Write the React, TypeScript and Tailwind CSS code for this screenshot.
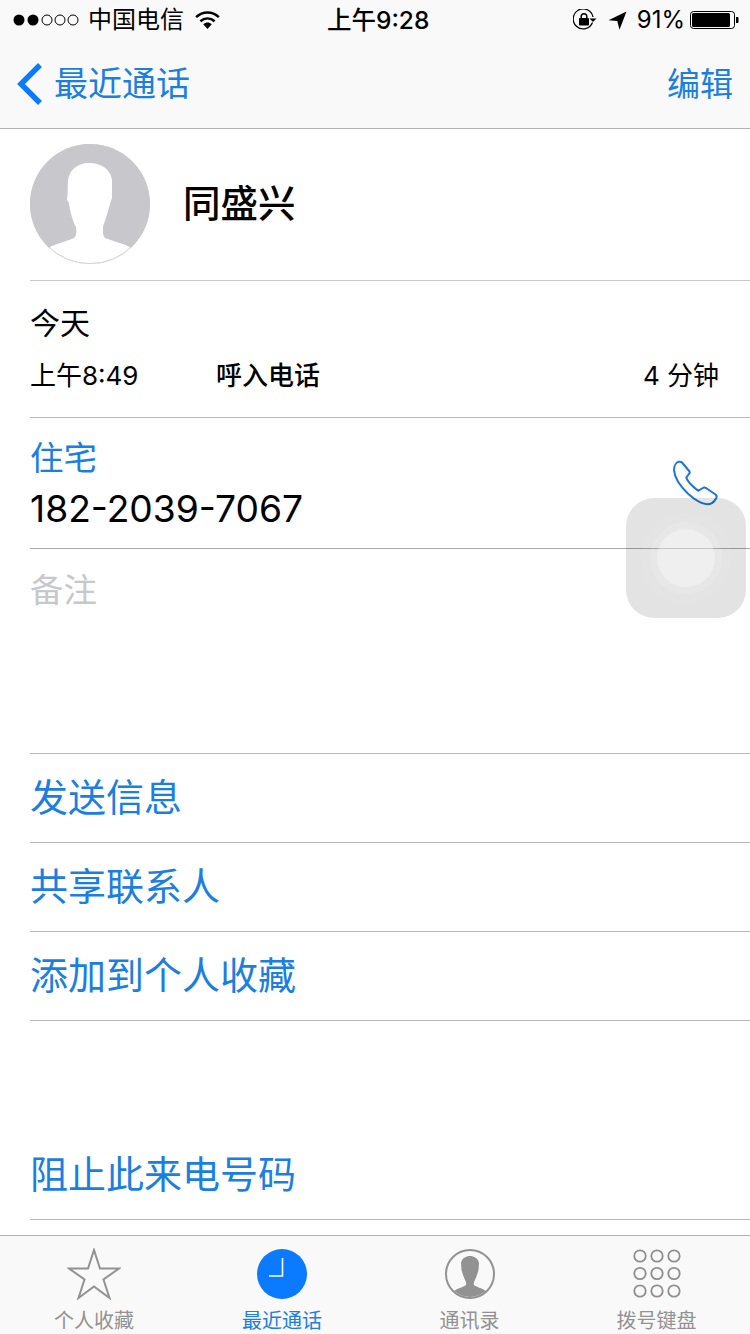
const FONT = "font-['Inter','Noto_Sans_CJK_SC',sans-serif]";

function Signal() {
  return (
    <svg width="67" height="14" viewBox="0 0 67 14">
      <circle cx="6" cy="7" r="5.5" fill="#000" />
      <circle cx="20" cy="7" r="5.5" fill="#000" />
      <circle cx="34" cy="7" r="5" fill="none" stroke="#000" strokeWidth="1" />
      <circle cx="47" cy="7" r="5" fill="none" stroke="#000" strokeWidth="1" />
      <circle cx="60" cy="7" r="5" fill="none" stroke="#000" strokeWidth="1" />
    </svg>
  );
}

function Wifi() {
  return (
    <svg width="25" height="18" viewBox="0 0 26 19">
      <path d="M1 6.500C8 0 18 0 25 6.500" fill="none" stroke="#000" strokeWidth="2.6" />
      <path d="M5.500 10.800C10 6.800 16 6.800 20.500 10.800" fill="none" stroke="#000" strokeWidth="2.6" />
      <path d="M8.500 14C11.200 11.600 14.800 11.600 17.500 14L13 19Z" fill="#000" />
    </svg>
  );
}

function RotationLock() {
  return (
    <svg width="24" height="22" viewBox="0 0 24 22">
      <path d="M19.500 13.500A10 10 0 1 1 20 8" fill="none" stroke="#000" strokeWidth="1.3" />
      <path d="M16.500 9.500h7l-3.500 3.600Z" fill="#000" />
      <rect x="6" y="9" width="10" height="7.5" rx="1" fill="#000" />
      <path d="M8.200 9.500V7.500a2.800 2.800 0 0 1 5.600 0v2" fill="none" stroke="#000" strokeWidth="1.5" />
    </svg>
  );
}

function Location() {
  return (
    <svg width="19" height="19" viewBox="0 0 19 19">
      <path d="M18.500 0.500L0.500 9.200L9.300 10L11.500 18.800Z" fill="#000" />
    </svg>
  );
}

function Battery() {
  return (
    <svg width="50" height="20" viewBox="0 0 50 20">
      <rect x="0.5" y="1.5" width="44" height="17" rx="3" fill="none" stroke="#000" strokeWidth="1" />
      <rect x="2" y="3" width="38" height="14" rx="1.5" fill="#000" />
      <path d="M46 7h1.500a1 1 0 0 1 1 1v4a1 1 0 0 1-1 1H46Z" fill="#000" />
    </svg>
  );
}

function Avatar() {
  return (
    <svg width="120" height="120" viewBox="0 0 120 120" className="shrink-0">
      <defs>
        <clipPath id="avatarClip">
          <circle cx="60" cy="60" r="60" />
        </clipPath>
      </defs>
      <circle cx="60" cy="60" r="60" fill="#c7c7cc" />
      <path
        clipPath="url(#avatarClip)"
        d="M15 125L20 103C28 99 38 97 44 94C47 91 46.500 87 46 83C42 76 40 66 38.500 58L37 56C38 50 37.500 42 38 36C39 26 48 19 59 19C72 19 81 26 82 36C82 42 82 48 82 54L80 60C78 68 75 76 73 83C73 87 72.500 91 75 94C82 97 92 99 100 103L105 125Z"
        fill="#fff"
      />
      <circle cx="60" cy="60" r="59.6" fill="none" stroke="#c7c7cc" strokeWidth="0.8" />
    </svg>
  );
}

function PhoneGlyph() {
  return (
    <svg width="46" height="46" viewBox="-1 -1 46 46" className="shrink-0">
      <path
        d="M1 9C1 5 3 1.500 5.500 0.800C7 0.500 8.200 0.600 9 1.500L16.500 10.500C17 11.500 16.600 12.500 15.500 13.500L13.300 16.500C13.800 18.500 15 20 17 22.500C20 25.500 22.500 28 25.300 29.700L29 27.500C30.500 26.500 31.700 26.300 33 27L42.500 33.500C43.800 34.500 44 36 43 37.500C41.500 40.500 38 43.300 34 43.300C28 43 21 38 15.300 33C8 26 1.500 17 1 9Z"
        fill="none"
        stroke="#1a76d6"
        strokeWidth="2"
        strokeLinejoin="round"
      />
    </svg>
  );
}

function Star() {
  return (
    <svg width="54" height="52" viewBox="0 0 54 52">
      <path
        d="M27 2L33 20.500H52L36.500 31.500L42.500 50L27 38.500L11.500 50L17.500 31.500L2 20.500H21Z"
        fill="none"
        stroke="#929292"
        strokeWidth="2"
      />
    </svg>
  );
}

function Clock() {
  return (
    <svg width="50" height="50" viewBox="0 0 50 50">
      <circle cx="25" cy="25" r="25" fill="#0a7aff" />
      <path d="M25.500 9V27H12" fill="none" stroke="#fff" strokeWidth="1.6" />
    </svg>
  );
}

function Contacts() {
  return (
    <svg width="50" height="50" viewBox="0 0 50 50">
      <defs>
        <clipPath id="contactClip">
          <circle cx="25" cy="25" r="23" />
        </clipPath>
      </defs>
      <circle cx="25" cy="25" r="24" fill="none" stroke="#929292" strokeWidth="2" />
      <path
        clipPath="url(#contactClip)"
        d="M8 50L9 42C13 39 19 38 21 36C21.500 34 21 33 20.500 32C18.500 28 17.500 24 16.500 21L16 14C17 9 21 7 25 7C29 7 33 9 34 14L33.500 21C32.500 24 31.500 28 29.500 32C29 33 28.500 34 29 36C31 38 37 39 41 42L42 50Z"
        fill="#929292"
      />
    </svg>
  );
}

function Keypad() {
  const pts = [7, 24, 41];
  const ys = [7, 24.5, 42];
  return (
    <svg width="50" height="50" viewBox="0 0 50 50">
      {ys.map((y) =>
        pts.map((x) => (
          <circle key={`${x}-${y}`} cx={x + 1} cy={y} r="5.7" fill="none" stroke="#8f8f8f" strokeWidth="1.8" />
        )),
      )}
    </svg>
  );
}

function TabItem({ icon, label, active }: { icon: React.ReactNode; label: string; active?: boolean }) {
  return (
    <div className="flex flex-col items-center">
      <div className="flex h-[52px] w-[54px] items-center justify-center">{icon}</div>
      <span
        className={`mt-[6px] text-[20px] leading-[30px] whitespace-nowrap ${active ? "text-[#1a7fe0]" : "text-[#929292]"}`}
      >
        {label}
      </span>
    </div>
  );
}

function ActionRow({ label }: { label: string }) {
  return (
    <div className="ml-[30px] flex h-[89px] items-center border-b border-[#b9b9bc] pb-[2px] text-[38px] leading-none text-[#1a7fe0]">
      {label}
    </div>
  );
}

export default function App() {
  return (
    <div className={`relative flex h-[1334px] w-[750px] flex-col overflow-hidden bg-white text-black ${FONT}`}>
      <header className="h-[129px] shrink-0 border-b border-[#b2b2b2] bg-[#f9f9f9]">
        <div className="relative flex h-[40px] items-center justify-between pr-[10px] pl-[13px]">
          <div className="flex items-center">
            <Signal />
            <span className="ml-[8px] text-[24px] leading-none">中国电信</span>
            <span className="ml-[11px]">
              <Wifi />
            </span>
          </div>
          <span className="absolute left-[327px] text-[24.5px] leading-none font-medium whitespace-nowrap">
            上午9:28
          </span>
          <div className="flex items-center">
            <RotationLock />
            <span className="ml-[11px]">
              <Location />
            </span>
            <span className="ml-[10px] text-[24px] leading-none whitespace-nowrap">91%</span>
            <span className="ml-[5px]">
              <Battery />
            </span>
          </div>
        </div>
        <div className="flex h-[88px] items-center justify-between px-[17px]">
          <div className="flex items-center text-[#1a7fe0]">
            <svg width="26" height="44" viewBox="0 0 26 44">
              <path d="M23 3L4 22L23 41" fill="none" stroke="#0a7aff" strokeWidth="5.5" />
            </svg>
            <span className="ml-[11px] text-[34px] leading-none">最近通话</span>
          </div>
          <span className="text-[33px] leading-none text-[#1a7fe0]">编辑</span>
        </div>
      </header>

      <main className="flex flex-1 flex-col">
        <section className="ml-[30px] flex h-[152px] items-center border-b border-[#c8c7cc] pb-[2px]">
          <Avatar />
          <span className="ml-[33px] text-[37.5px] leading-none font-medium">同盛兴</span>
        </section>

        <section className="ml-[30px] h-[137px] border-b border-[#b9b9bc] pt-[27px] pr-[31px]">
          <div className="text-[30px] leading-[30px]">今天</div>
          <div className="mt-[23px] flex items-center text-[26px] leading-[30px]">
            <span className="w-[186px]">上午8:49</span>
            <span className="font-medium">呼入电话</span>
            <span className="ml-auto">4 分钟</span>
          </div>
        </section>

        <section className="ml-[30px] flex h-[131px] items-center justify-between border-b border-[#a9a9ac] pr-[32px]">
          <div>
            <div className="text-[33.5px] leading-[40px] text-[#1a7fe0]">住宅</div>
            <div className="mt-[11px] text-[37.2px] leading-[40px]">182-2039-7067</div>
          </div>
          <PhoneGlyph />
        </section>

        <section className="ml-[30px] h-[205px] border-b border-[#b9b9bc] pt-[21px]">
          <div className="text-[33.5px] leading-[40px] text-[#c7c7cc]">备注</div>
        </section>

        <ActionRow label="发送信息" />
        <ActionRow label="共享联系人" />
        <ActionRow label="添加到个人收藏" />
        <div className="h-[110px]" />
        <ActionRow label="阻止此来电号码" />
      </main>

      <footer className="grid h-[99px] shrink-0 grid-cols-[188px_188px_187px_187px] border-t border-[#b2b2b2] bg-[#f9f9f9] pt-[12px]">
        <TabItem icon={<Star />} label="个人收藏" />
        <TabItem icon={<Clock />} label="最近通话" active />
        <TabItem icon={<Contacts />} label="通讯录" />
        <TabItem icon={<Keypad />} label="拨号键盘" />
      </footer>

      <div className="absolute top-[498px] left-[626px] flex h-[120px] w-[120px] items-center justify-center rounded-[28px] bg-[#000]/11">
        <div className="flex h-[90px] w-[90px] items-center justify-center rounded-full bg-white/5">
          <div className="flex h-[72px] w-[72px] items-center justify-center rounded-full bg-white/10">
            <div className="h-[58px] w-[58px] rounded-full bg-white/35" />
          </div>
        </div>
      </div>
    </div>
  );
}
